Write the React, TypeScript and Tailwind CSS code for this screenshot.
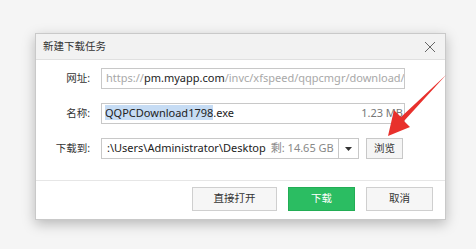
import React from 'react';

const FONT = { fontFamily: '"Noto Sans", "Noto Sans CJK SC", sans-serif' };

function Field({ label, children }: { label: string; children: React.ReactNode }) {
  return (
    <div className="flex items-center h-[21px]">
      <div className="w-[54px] text-right text-[10.5px] text-[#333]">{label}</div>
      <div className="ml-[11px] flex items-center h-full">{children}</div>
    </div>
  );
}

export default function App() {
  return (
    <div className="relative w-[476px] h-[249px] bg-[#f5f5f5] overflow-hidden pt-[33px] pl-[35px]" style={FONT}>
      <div className="w-[411px] h-[187px] bg-white border border-[#c9c9c9] shadow-[0_4px_12px_rgba(0,0,0,0.25)] flex flex-col">
        <div className="h-[26px] bg-[#f2f2f2] border-b border-[#e0e0e0] flex items-center justify-between pl-[7px] pr-[9px] shrink-0">
          <span className="text-[10.5px] text-[#333]">新建下载任务</span>
          <svg width="12" height="12" viewBox="0 0 12 12" className="text-[#666]">
            <path d="M1 1 L11 11 M11 1 L1 11" stroke="currentColor" strokeWidth="1" />
          </svg>
        </div>
        <div className="flex flex-col gap-[14px] pt-[8px] h-[121px] border-b border-[#e6e6e6] shrink-0">
          <Field label="网址:">
            <div className="w-[304px] h-[21px] border border-[#c8c8c8] flex items-center pl-[4px] overflow-hidden whitespace-nowrap text-[11px] text-[#a8a8a8]">
              https://<span className="text-[#222]">pm.myapp.com</span>/invc/xfspeed/qqpcmgr/download/QQPCDownload1798.exe
            </div>
          </Field>
          <Field label="名称:">
            <div className="w-[304px] h-[21px] border border-[#c8c8c8] flex items-center justify-between pl-[3px] pr-[1px] overflow-hidden whitespace-nowrap text-[11px] text-[#222]">
              <span>
                <span className="bg-[#c6dcf4]">QQPCDownload1798</span>.exe
              </span>
              <span className="text-[#777]">1.23 MB</span>
            </div>
          </Field>
          <Field label="下载到:">
            <div className="w-[258px] h-[21px] border border-[#c8c8c8] flex items-center">
              <div className="w-[237px] h-full flex items-center pl-[5px] overflow-hidden whitespace-nowrap text-[11px] text-[#222]">
                :\Users\Administrator\Desktop<span className="ml-[5px] text-[#888]">剩: 14.65 GB</span>
              </div>
              <div className="w-[20px] h-full border-l border-[#c8c8c8] flex items-center justify-center">
                <svg width="7" height="4" viewBox="0 0 7 4">
                  <path d="M0 0 L7 0 L3.5 4 Z" fill="#333" />
                </svg>
              </div>
            </div>
            <div className="ml-[7px] w-[37px] h-[21px] border border-[#c8c8c8] bg-[#f5f5f5] flex items-center justify-center text-[10.5px] text-[#333]">
              浏览
            </div>
          </Field>
        </div>
        <div className="flex justify-end gap-[11px] pt-[6px] pr-[12px]">
          <div className="w-[85px] h-[24px] border border-[#cfcfcf] bg-[#f6f6f6] flex items-center justify-center text-[10.5px] text-[#333]">
            直接打开
          </div>
          <div className="w-[67px] h-[24px] border border-[#22ad55] bg-[#2bbd62] flex items-center justify-center text-[10.5px] text-white">
            下载
          </div>
          <div className="w-[67px] h-[24px] border border-[#cfcfcf] bg-[#f6f6f6] flex items-center justify-center text-[10.5px] text-[#333]">
            取消
          </div>
        </div>
      </div>
      <svg className="absolute left-0 top-0" width="476" height="249" viewBox="0 0 476 249">
        <polygon points="388,136 394,110 401,117 446,75 404,121 410,127" fill="#e8302c" />
      </svg>
    </div>
  );
}
